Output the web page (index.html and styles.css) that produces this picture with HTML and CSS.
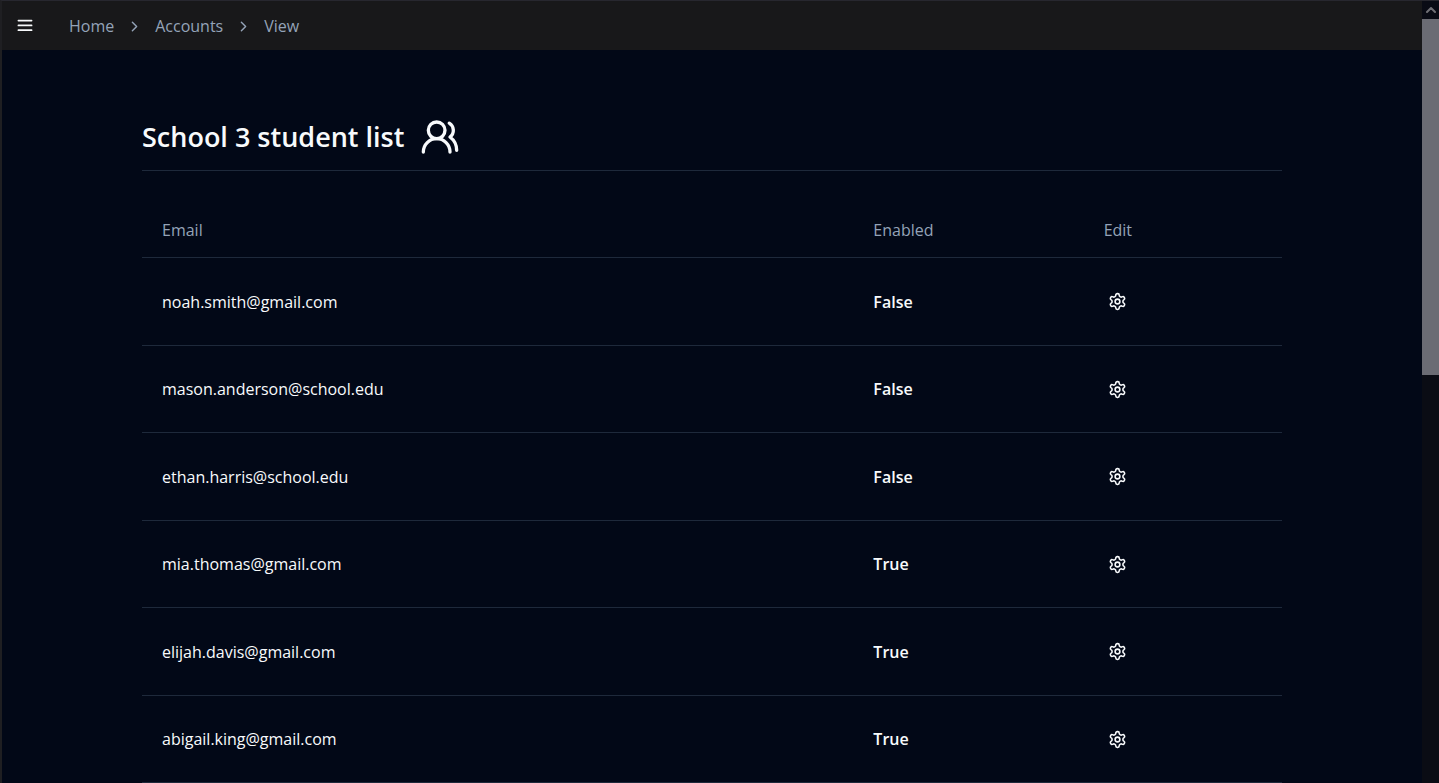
FILE: index.html
```html
<!DOCTYPE html>
<html lang="en">
<head>
<meta charset="utf-8">
<meta name="viewport" content="width=device-width, initial-scale=1">
<title>School 3 student list</title>
<link rel="stylesheet" href="styles.css">
</head>
<body>
<svg class="sprite" aria-hidden="true">
  <symbol id="gear" viewBox="0 0 24 24"><path d="M12.22 2h-.44a2 2 0 0 0-2 2v.18a2 2 0 0 1-1 1.73l-.43.25a2 2 0 0 1-2 0l-.15-.08a2 2 0 0 0-2.73.73l-.22.38a2 2 0 0 0 .73 2.73l.15.1a2 2 0 0 1 1 1.72v.51a2 2 0 0 1-1 1.74l-.15.09a2 2 0 0 0-.73 2.73l.22.38a2 2 0 0 0 2.73.73l.15-.08a2 2 0 0 1 2 0l.43.25a2 2 0 0 1 1 1.73V20a2 2 0 0 0 2 2h.44a2 2 0 0 0 2-2v-.18a2 2 0 0 1 1-1.73l.43-.25a2 2 0 0 1 2 0l.15.08a2 2 0 0 0 2.73-.73l.22-.39a2 2 0 0 0-.73-2.73l-.15-.08a2 2 0 0 1-1-1.74v-.5a2 2 0 0 1 1-1.74l.15-.09a2 2 0 0 0 .73-2.73l-.22-.38a2 2 0 0 0-2.73-.73l-.15.08a2 2 0 0 1-2 0l-.43-.25a2 2 0 0 1-1-1.73V4a2 2 0 0 0-2-2z"/><circle cx="12" cy="12" r="3"/></symbol>
  <symbol id="chevron" viewBox="0 0 24 24"><path d="m9 18 6-6-6-6"/></symbol>
</svg>
<div class="shell">
  <div class="page">
    <header class="topbar">
      <button class="menu" type="button" aria-label="Menu">
        <svg class="icon menu-icon" viewBox="0 0 15 15"><path d="M2 3h11M2 7h11M2 11h11"/></svg>
      </button>
      <nav class="crumbs" aria-label="Breadcrumb">
        <a href="#">Home</a>
        <svg class="icon chevron"><use href="#chevron"/></svg>
        <a href="#">Accounts</a>
        <svg class="icon chevron"><use href="#chevron"/></svg>
        <a href="#">View</a>
      </nav>
    </header>
    <main class="content">
      <div class="heading">
        <h1>School 3 student list</h1>
        <svg class="icon users" viewBox="0 0 24 24"><path d="M18 21a8 8 0 0 0-16 0"/><circle cx="10" cy="8" r="5"/><path d="M22 20c0-3.37-2-6.5-4-8a5 5 0 0 0-.45-8.3"/></svg>
      </div>
      <table class="students">
        <thead>
          <tr><th class="col-email" scope="col">Email</th><th class="col-enabled" scope="col">Enabled</th><th class="col-edit" scope="col">Edit</th></tr>
        </thead>
        <tbody>
          <tr><td>noah.smith@gmail.com</td><td class="state">False</td><td><button class="edit" type="button" aria-label="Edit noah.smith@gmail.com"><svg class="icon gear"><use href="#gear"/></svg></button></td></tr>
          <tr><td>mason.anderson@school.edu</td><td class="state">False</td><td><button class="edit" type="button" aria-label="Edit mason.anderson@school.edu"><svg class="icon gear"><use href="#gear"/></svg></button></td></tr>
          <tr><td>ethan.harris@school.edu</td><td class="state">False</td><td><button class="edit" type="button" aria-label="Edit ethan.harris@school.edu"><svg class="icon gear"><use href="#gear"/></svg></button></td></tr>
          <tr><td>mia.thomas@gmail.com</td><td class="state">True</td><td><button class="edit" type="button" aria-label="Edit mia.thomas@gmail.com"><svg class="icon gear"><use href="#gear"/></svg></button></td></tr>
          <tr><td>elijah.davis@gmail.com</td><td class="state">True</td><td><button class="edit" type="button" aria-label="Edit elijah.davis@gmail.com"><svg class="icon gear"><use href="#gear"/></svg></button></td></tr>
          <tr><td>abigail.king@gmail.com</td><td class="state">True</td><td><button class="edit" type="button" aria-label="Edit abigail.king@gmail.com"><svg class="icon gear"><use href="#gear"/></svg></button></td></tr>
        </tbody>
      </table>
    </main>
  </div>
  <div class="scrollbar" aria-hidden="true">
    <div class="scroll-up"><svg class="icon scroll-arrow" viewBox="0 0 10 10"><path d="M1 7l4-4 4 4"/></svg></div>
    <div class="scroll-thumb"></div>
  </div>
</div>
</body>
</html>
```
FILE: styles.css
```css
* { box-sizing: border-box; }

body {
  margin: 0;
  background: #020817;
  color: #f8fafc;
  font: 16px/24px "Segoe UI", "Open Sans", "Noto Sans", sans-serif;
}

.sprite { display: none; }

.icon {
  display: block;
  fill: none;
  stroke: currentColor;
  stroke-width: 2;
  stroke-linecap: round;
  stroke-linejoin: round;
}

.shell {
  display: flex;
  min-height: 100vh;
  border-top: 1px solid #27272f;
  border-left: 2px solid #1f1f22;
}

.page { flex: 1; min-width: 0; }

.topbar {
  display: flex;
  align-items: center;
  gap: 32px;
  height: 49px;
  padding: 1px 11px 0;
  background: #18181a;
}

.menu, .edit {
  display: grid;
  place-items: center;
  padding: 0;
  border: 0;
  background: none;
  color: inherit;
  cursor: pointer;
}

.menu { width: 24px; height: 24px; }
.menu-icon { width: 18px; height: 18px; stroke-width: 1.4; }

.crumbs { display: flex; align-items: center; gap: 12px; color: #94a3b8; }
.crumbs a { color: inherit; text-decoration: none; }
.chevron { width: 17px; height: 17px; }

.content { max-width: 1140px; margin: 0 auto; padding-top: 64px; }

.heading {
  display: flex;
  align-items: center;
  gap: 16px;
  height: 57px;
  padding-bottom: 10px;
  border-bottom: 1px solid #1e293b;
}

h1 { margin: 0; font-size: 27px; line-height: 36px; font-weight: 600; }
.users { width: 40px; height: 40px; }

.students {
  width: 100%;
  margin-top: 32px;
  border-collapse: separate;
  border-spacing: 0;
  table-layout: fixed;
}

.students th, .students td {
  padding: 0 20px;
  border-bottom: 1px solid #1e293b;
  text-align: left;
}

.students th { height: 55px; font-weight: 400; color: #94a3b8; }
.students td { height: 87px; }
.students tbody tr:nth-child(odd) td { height: 88px; }
.col-email { width: 62.4%; }
.col-enabled { width: 20.2%; }
.students .state { font-weight: 600; }

.edit { width: 28px; height: 24px; }
.gear { width: 19px; height: 19px; }

.scrollbar { width: 17px; background: #0a0c14; }
.scroll-up { display: grid; place-items: center; height: 18px; background: #090b15; color: #707076; }
.scroll-arrow { width: 10px; height: 10px; }
.scroll-thumb { height: 356px; background: #6b6c74; }
```
